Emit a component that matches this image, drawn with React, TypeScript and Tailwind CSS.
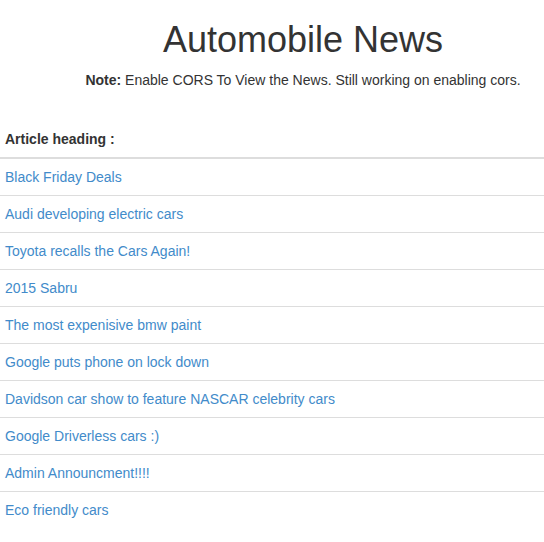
import React from "react";

const items = [
  "Black Friday Deals",
  "Audi developing electric cars",
  "Toyota recalls the Cars Again!",
  "2015 Sabru",
  "The most expenisive bmw paint",
  "Google puts phone on lock down",
  "Davidson car show to feature NASCAR celebrity cars",
  "Google Driverless cars :)",
  "Admin Announcment!!!!",
  "Eco friendly cars",
];

export default function App() {
  return (
    <div
      className="w-[544px] min-h-[542px] bg-white text-[#333] text-[14px] leading-[20px]"
      style={{ fontFamily: '"Liberation Sans", Arial, Helvetica, sans-serif' }}
    >
      <div className="ml-[62px] text-center">
        <h1 className="mt-[20px] mb-[10px] text-[36px] leading-[1.1] font-normal">Automobile News</h1>
        <p className="mb-[10px]">
          <b>Note:</b> Enable CORS To View the News. Still working on enabling cors.
        </p>
      </div>
      <table className="w-full mt-[31px] border-collapse">
        <thead>
          <tr>
            <th className="text-left font-bold px-[5px] py-2 border-b-2 border-[#ddd]">Article heading :</th>
          </tr>
        </thead>
        <tbody>
          {items.map((t, i) => (
            <tr key={i}>
              <td className={"px-[5px] py-2 " + (i > 0 ? "border-t border-[#ddd]" : "")}>
                <a className="text-[#428bca] no-underline" href="#">{t}</a>
              </td>
            </tr>
          ))}
        </tbody>
      </table>
    </div>
  );
}
